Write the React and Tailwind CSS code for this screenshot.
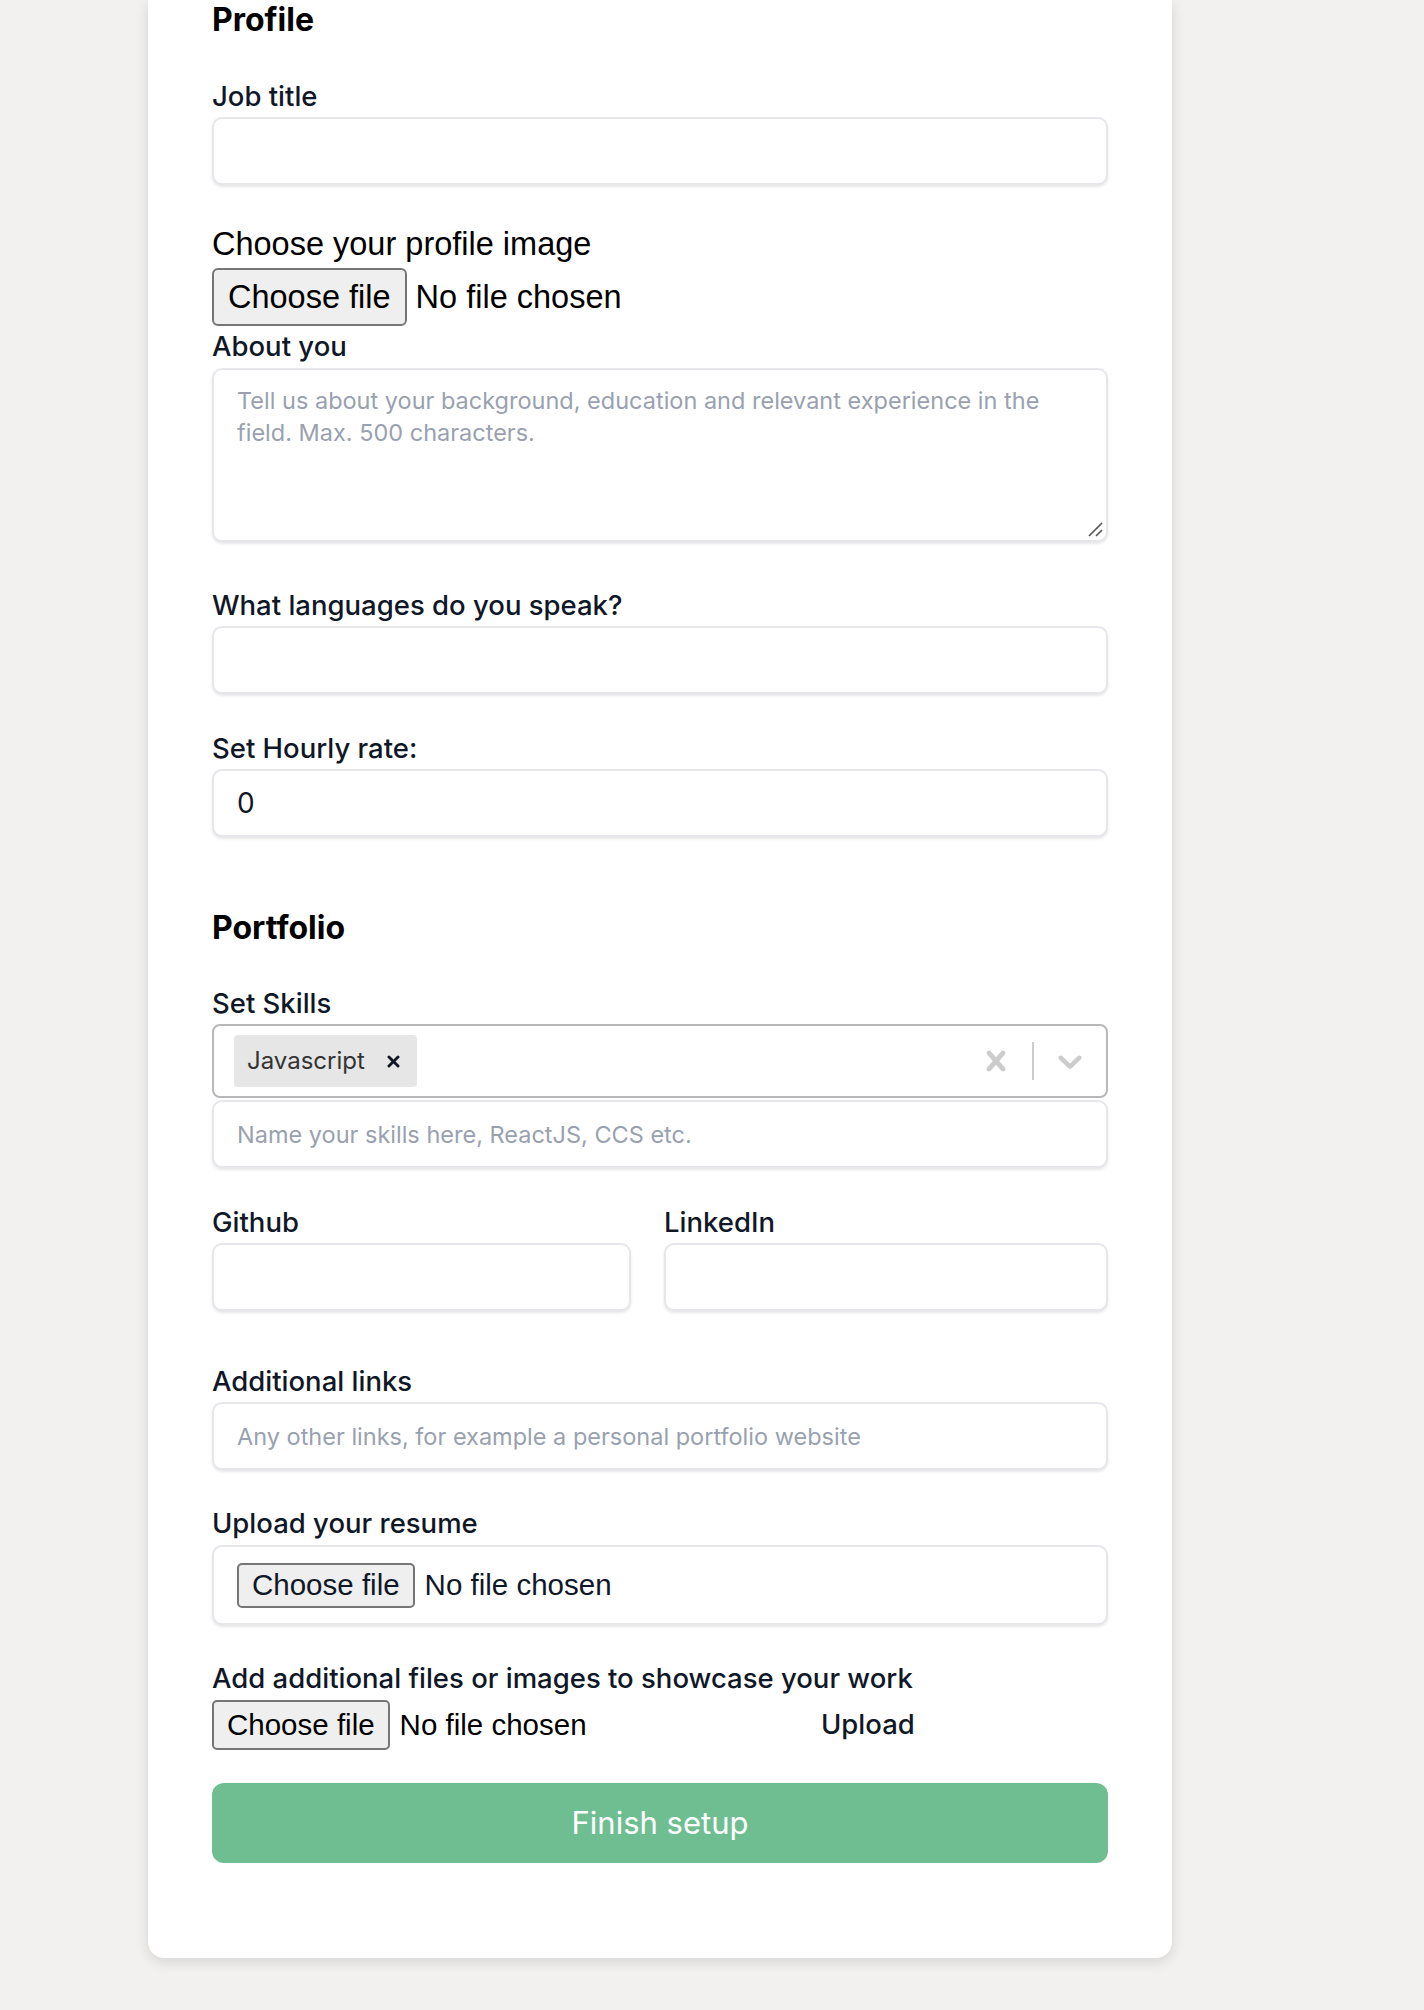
const inputCls =
  'block w-full h-[68px] rounded-[10px] border-2 border-[#e5e7eb] bg-white px-[23px] text-[23.5px] leading-[32px] text-gray-900 shadow-[0_2px_3px_rgba(0,0,0,0.1)] outline-none placeholder:text-gray-400'

function Label({ children, className = '' }) {
  return <label className={`block text-[27.5px] leading-[40px] font-medium text-gray-900 ${className}`}>{children}</label>
}

function CrossIcon({ className }) {
  return (
    <svg viewBox="0 0 20 20" className={className} fill="currentColor">
      <path d="M14.348 14.849c-0.469 0.469-1.229 0.469-1.697 0l-2.651-3.030-2.651 3.029c-0.469 0.469-1.229 0.469-1.697 0-0.469-0.469-0.469-1.229 0-1.697l2.758-3.150-2.759-3.152c-0.469-0.469-0.469-1.228 0-1.697s1.228-0.469 1.697 0l2.652 3.031 2.651-3.031c0.469-0.469 1.228-0.469 1.697 0s0.469 1.229 0 1.697l-2.758 3.152 2.758 3.150c0.469 0.469 0.469 1.229 0 1.698z" />
    </svg>
  )
}

function ChevronIcon({ className }) {
  return (
    <svg viewBox="0 0 20 20" className={className} fill="currentColor">
      <path d="M4.516 7.548c0.436-0.446 1.043-0.481 1.576 0l3.908 3.747 3.908-3.747c0.533-0.481 1.141-0.446 1.574 0 0.436 0.445 0.408 1.197 0 1.615-0.406 0.418-4.695 4.502-4.695 4.502-0.217 0.223-0.502 0.335-0.787 0.335s-0.57-0.112-0.789-0.335c0 0-4.287-4.084-4.695-4.502s-0.436-1.17 0-1.615z" />
    </svg>
  )
}

function SkillsSelect() {
  return (
    <div className="mt-[1px] flex h-[74px] items-stretch rounded-[8px] border-2 border-[#b8b8b8] bg-white">
      <div className="flex flex-1 items-center px-[16px]">
        <div className="ml-[4px] flex h-[52px] items-center rounded-[4px] bg-[#e6e6e6] text-[#333]">
          <span className="pl-[13px] pr-[10px] text-[24px]">Javascript</span>
          <span className="flex h-full items-center pl-[12px] pr-[17px] text-gray-900">
            <svg viewBox="0 0 10 10" className="h-[13px] w-[13px]" stroke="currentColor" strokeWidth="2.2" strokeLinecap="round">
              <path d="M1.5 1.5l7 7M8.5 1.5l-7 7" />
            </svg>
          </span>
        </div>
      </div>
      <div className="flex items-center">
        <div className="p-[16px] text-[#cccccc]">
          <CrossIcon className="h-[40px] w-[40px]" />
        </div>
        <span className="my-[16px] w-[2px] self-stretch bg-[#cccccc]" />
        <div className="p-[16px] text-[#cccccc]">
          <ChevronIcon className="h-[40px] w-[40px]" />
        </div>
      </div>
    </div>
  )
}

export default function App() {
  return (
    <div className="min-h-screen bg-[#f2f1ef] pb-[52px] font-['Inter',sans-serif]">
      <div className="ml-[148px] w-[1024px] rounded-b-[16px] bg-white px-[64px] pb-[95px] shadow-[0_4px_14px_rgba(0,0,0,0.12)]">
        <h2 className="text-[32px] leading-[40px] font-bold text-black">Profile</h2>

        <Label className="mt-[36px]">Job title</Label>
        <input className={`mt-[1px] ${inputCls}`} />

        <p className="mt-[35px] font-['Liberation_Sans',Arial,sans-serif] text-[32.5px] leading-[48px] text-black">
          Choose your profile image
        </p>
        <div className="flex items-center font-['Liberation_Sans',Arial,sans-serif] text-[32.5px] text-black">
          <span className="flex h-[58px] items-center rounded-[6px] border-2 border-[#767676] bg-[#efefef] px-[14px]">
            Choose file
          </span>
          <span className="ml-[9px]">No file chosen</span>
        </div>

        <Label>About you</Label>
        <div className="relative mt-[2px]">
          <textarea
            className="block h-[174px] w-full resize-none rounded-[10px] border-2 border-[#e5e7eb] bg-white px-[23px] py-[15px] text-[23.5px] leading-[32px] text-gray-900 shadow-[0_2px_3px_rgba(0,0,0,0.1)] outline-none placeholder:text-gray-400"
            placeholder="Tell us about your background, education and relevant experience in the field. Max. 500 characters."
          />
          <svg viewBox="0 0 16 16" className="absolute bottom-[5px] right-[5px] h-[16px] w-[16px]" stroke="#555" strokeWidth="1.6">
            <path d="M15 2L2 15M15 9L9 15" />
          </svg>
        </div>

        <Label className="mt-[43px]">What languages do you speak?</Label>
        <input className={`mt-[1px] ${inputCls}`} />

        <Label className="mt-[34px]">Set Hourly rate:</Label>
        <input className={`mt-[1px] ${inputCls} text-[28px]`} defaultValue="0" />

        <h2 className="mt-[71px] text-[32px] leading-[40px] font-bold text-black">Portfolio</h2>

        <Label className="mt-[35px]">Set Skills</Label>
        <SkillsSelect />
        <input className={`mt-[2px] ${inputCls}`} placeholder="Name your skills here, ReactJS, CCS etc." />

        <div className="mt-[34px] flex gap-[33px]">
          <div className="w-[419px]">
            <Label>Github</Label>
            <input className={`mt-[1px] ${inputCls}`} />
          </div>
          <div className="flex-1">
            <Label>LinkedIn</Label>
            <input className={`mt-[1px] ${inputCls}`} />
          </div>
        </div>

        <Label className="mt-[50px]">Additional links</Label>
        <input className={`mt-[1px] ${inputCls}`} placeholder="Any other links, for example a personal portfolio website" />

        <Label className="mt-[33px]">Upload your resume</Label>
        <div className="mt-[2px] flex h-[80px] items-center rounded-[10px] border-2 border-[#e5e7eb] bg-white px-[23px] font-['Liberation_Sans',Arial,sans-serif] text-[29.5px] text-gray-900 shadow-[0_2px_3px_rgba(0,0,0,0.1)]">
          <span className="flex h-[45px] items-center rounded-[5px] border-2 border-[#767676] bg-[#efefef] px-[13px]">
            Choose file
          </span>
          <span className="ml-[10px]">No file chosen</span>
        </div>

        <Label className="mt-[33px]">Add additional files or images to showcase your work</Label>
        <div className="mt-[2px] flex items-center">
          <div className="flex w-[609px] items-center font-['Liberation_Sans',Arial,sans-serif] text-[29.5px] text-black">
            <span className="flex h-[50px] items-center rounded-[5px] border-2 border-[#767676] bg-[#efefef] px-[13px]">
              Choose file
            </span>
            <span className="ml-[10px]">No file chosen</span>
          </div>
          <button className="text-[27.5px] font-medium text-gray-900">Upload</button>
        </div>

        <button className="mt-[33px] block h-[80px] w-full rounded-[12px] bg-[#6fbe92] text-[31px] text-white">
          Finish setup
        </button>
      </div>
    </div>
  )
}
